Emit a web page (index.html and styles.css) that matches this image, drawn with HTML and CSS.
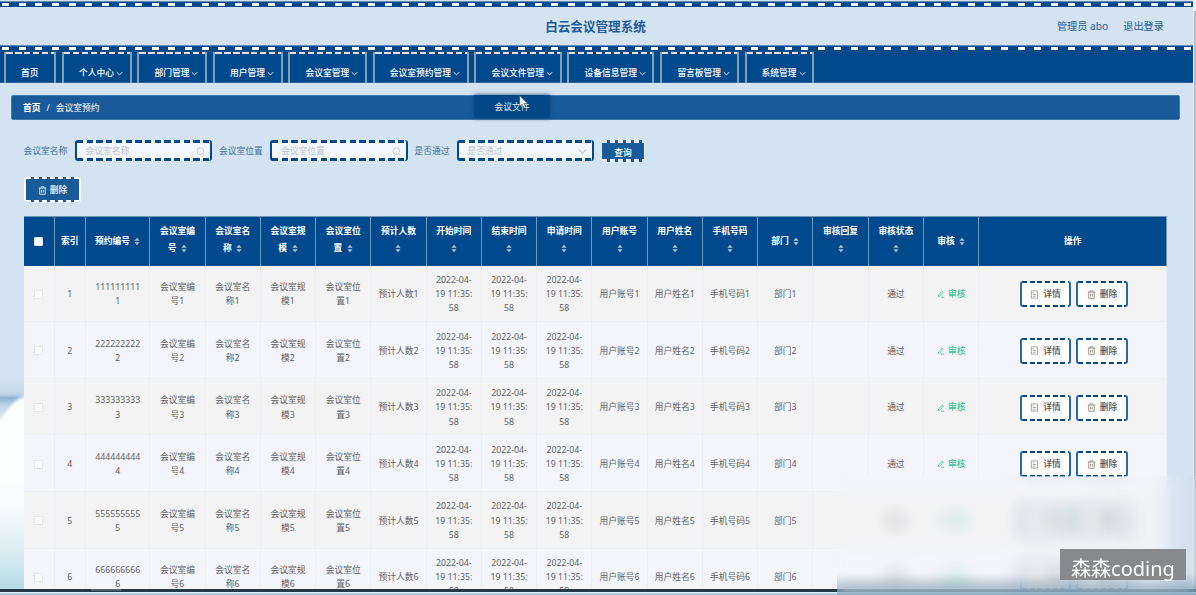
FILE: index.html
```html
<!DOCTYPE html>
<html lang="zh-CN">
<head>
<meta charset="utf-8">
<title>白云会议管理系统</title>
<link rel="stylesheet" href="styles.css">
</head>
<body>
<svg class="defs" width="0" height="0">
  <symbol id="chev" viewBox="0 0 10 10"><path d="M1 3 5 7 9 3" fill="none" stroke="currentColor" stroke-width="1.2"/></symbol>
  <symbol id="search" viewBox="0 0 10 10"><circle cx="4.8" cy="4.6" r="3.7" fill="none" stroke="currentColor" stroke-width=".9"/><path d="M7.2 7.2 9 9" stroke="currentColor" stroke-width=".9"/></symbol>
  <symbol id="trash" viewBox="0 0 10 10"><path d="M.8 2.3h8.4M3.4 2V.9h3.2V2M1.9 2.5v6.7h6.2V2.5M4 4.3v3M6 4.3v3" fill="none" stroke="currentColor" stroke-width=".9"/></symbol>
  <symbol id="doc" viewBox="0 0 10 10"><path d="M1.5 1h7v8h-7zM3.2 3h1.5M3.2 5h3.6M3.2 7h2.2M6.3 7h.7" fill="none" stroke="currentColor" stroke-width=".8"/></symbol>
  <symbol id="edit" viewBox="0 0 10 10"><path d="M2 6.2 6.4 1.3 8 2.7 3.6 7.6 1.7 8zM5 9h4" fill="none" stroke="currentColor" stroke-width="1"/></symbol>
  <symbol id="sort" viewBox="0 0 6 10"><path d="M3 .8 5.9 4.2H.1zM3 9.2 .1 5.8h5.8z" fill="currentColor"/></symbol>
</svg>
<div class="page">
  <div class="stripe first"></div>
  <header class="header">
    <h1 class="title">白云会议管理系统</h1>
    <div class="user"><span>管理员 abo</span><span>退出登录</span></div>
  </header>
  <div class="stripe"></div>
  <nav class="nav" id="nav"></nav>
  <div class="crumb"><b>首页</b><span>/</span><span>会议室预约</span></div>
  <div class="filters">
    <label>会议室名称</label>
    <div class="input dash"><span>会议室名称</span><svg class="ico"><use href="#search"/></svg></div>
    <label>会议室位置</label>
    <div class="input dash"><span>会议室位置</span><svg class="ico"><use href="#search"/></svg></div>
    <label>是否通过</label>
    <div class="input dash"><span>是否通过</span><svg class="ico"><use href="#chev"/></svg></div>
    <button class="btn query dash">查询</button>
  </div>
  <button class="btn remove dash"><svg class="ico"><use href="#trash"/></svg>删除</button>
  <div class="table" id="table"></div>
  <div class="cloud"></div>
</div>
<div class="scrollbar"></div>
<div class="submenu">会议文件</div>
<svg class="cursor" viewBox="0 0 8 13"><path d="M.5.5v10l2.3-2 1.6 3.7 1.6-.8-1.6-3.4h3z" fill="#fff" stroke="#345" stroke-width=".5"/></svg>
<div class="player"><i></i></div>
<div class="haze"></div>
<div class="mark">森森coding</div>
<script src="app.js"></script>
</body>
</html>
```
FILE: styles.css
```css
* { box-sizing: border-box; }
body {
  margin: 0; width: 1196px; height: 595px; overflow: hidden; display: flex;
  position: relative; background: #d4e3f1; color: #606266;
  font: 8.75px/14.2px "Noto Sans", "Noto Sans CJK SC", sans-serif;
}
.defs { position: absolute; }
.page { width: 1193px; height: 595px; overflow: hidden; position: relative; padding-top: 1px; }
.scrollbar { width: 3px; background: linear-gradient(#f4f4f4 11px, #b9bcbe 11px); border-left: 1px solid #e9eef2; }

.stripe {
  height: 6px; border-top: 1px solid #5e8bb2;
  background: repeating-linear-gradient(90deg, #fff 0 7px, transparent 7px 16.65px) 2px 1px / 100% 3px no-repeat, #00498d;
}
.header { height: 38px; display: grid; grid-template-columns: 1fr auto 1fr; align-items: center; color: #1f5c97; }
.title { margin: 1px 2px 0 0; font-size: 12.6px; line-height: 20px; font-weight: 700; grid-column: 2; }
.user { display: flex; justify-content: flex-end; gap: 15px; padding: 1px 29px 0 0; font-size: 10.2px; }

.nav { height: 32px; background: #00498d; display: flex; gap: 5.8px; padding-left: 4px; border-top: 1px solid #1c4c7c; border-bottom: 1px solid #2b649b; }
.tab {
  height: 31px; flex: none; display: flex; align-items: center; gap: 2px; padding: 12px 6.6px 0 15.1px;
  border: solid #7fa2b5; border-width: 0 2px; color: #fff; font-weight: 500; white-space: nowrap;
  background: repeating-linear-gradient(90deg, #e9dfe3 0 6.5px, transparent 6.5px 9px) 0 0 / 100% 2px no-repeat;
}
.tab .ico { width: 7px; height: 7px; }
.tab.home { padding-right: 15.5px; }

.crumb {
  margin: 12px 13px 0 11px; height: 25px; border-radius: 2px; background: #185b98; border: 1px solid #3f7aac;
  display: flex; align-items: center; gap: 6px; padding: 1px 0 0 11px; color: #fff;
}
.filters { display: flex; align-items: center; height: 23px; margin: 19px 0 0 23.5px; color: #4d7ba8; }
.filters label { width: 51px; color: #3f719f; white-space: nowrap; padding-top: 1px; }
.filters label:nth-of-type(3) { width: 42px; }
.dash {
  --c: #00498d; --t: 3px; --on: 6.3px; --per: 9.7px; --bg: #f4f8fc;
  background:
    repeating-linear-gradient(90deg, var(--c) 0 var(--on), transparent var(--on) var(--per)) 0 0 / 100% var(--t) no-repeat,
    repeating-linear-gradient(90deg, var(--c) 0 var(--on), transparent var(--on) var(--per)) 0 100% / 100% var(--t) no-repeat,
    var(--bg);
  border-radius: 3px;
}
.input {
  width: 137.5px; height: 21.5px; margin-right: 7px; padding: 1px 5px 0 9px; color: #bcc3cc;
  border: solid #00498d; border-width: 0 2px; display: flex; align-items: center; justify-content: space-between;
}
.ico { width: 9px; height: 9px; flex: none; display: block; }
.btn { border: 0; color: #fff; font: inherit; font-weight: 500; display: flex; align-items: center; justify-content: center; padding: 0; }
.dash.query { --c: #e7eef5; --t: 3px; --on: 5px; --per: 8px; --bg: #185b98; width: 44px; height: 22px; border: solid #e7eef5; border-width: 0 1px; padding-top: 5px; }
.dash.remove { --c: #fff; --t: 2px; --on: 5px; --per: 8px; --bg: #185b98; width: 57px; height: 25px; margin: 15px 0 0 24px; padding-top: 2px; border: solid #fff; border-width: 0 2px; gap: 3px; }

.table {
  margin: 14px 0 0 23.5px; width: 1143.7px; display: grid; position: relative; z-index: 1;
  grid-template-columns: 31px 31.5px 64.3px repeat(15, 55.27px) 1fr;
  grid-template-rows: 49.6px; grid-auto-rows: 56.6px;
}
.th {
  background: #00498d; color: #fff; font-weight: 700; border-right: 1px solid #6c9cbc; border-top: 1px solid #6c96b5;
  line-height: 17px; display: flex; flex-direction: column; align-items: center; justify-content: center; padding: 0 0 2px;
}
.th.one { padding-bottom: 0; }
.th > div { display: flex; align-items: center; gap: 4.5px; height: 17px; white-space: nowrap; }
.th svg { width: 6px; height: 9px; color: #b3c3d0; }
.td {
  display: flex; align-items: center; justify-content: center; text-align: center; white-space: nowrap;
  background: #f3f3f3; border-right: 1px solid #ebeef5; border-bottom: 1px solid #ebeef5; padding-top: 2px;
}
.td.even { background: #f4f5fb; }
.box { display: block; width: 9px; height: 9px; background: #fff; border: 1px solid #e2e4e9; border-radius: 1px; }
.td .box { margin-right: 1px; }
.td.audit { color: #3dc49a; gap: 3px; font-weight: 500; }
.audit .ico { width: 8px; height: 8px; }
.td.ops { gap: 5px; padding-left: 2px; }
.dash.op {
  --t: 2px; --on: 5px; --per: 7.7px; --bg: #fff; width: 51.5px; height: 26px; gap: 4px; color: #4c4e52;
  border: solid #2b689d; border-width: 0 2px;
}
.op .ico { color: #8b8275; }

.cloud {
  position: absolute; left: 0; top: 376px; width: 24px; height: 219px;
  background: radial-gradient(ellipse 46px 95px at 32px 111px, #fdfefe 94%, transparent 100%) 0 0 / 100% 110px no-repeat,
    linear-gradient(#d4e3f1 0, #c3d7e8 18px, #8fb5d6 22px, #c0d5e7 30px, #fbfdfe 50px, #fafdfe 125px, #d8ebf2 180px, #b4dbe6 213px);
}
.submenu {
  position: absolute; left: 474px; top: 95px; width: 76px; height: 23px; background: #024887; color: #e3ecf4; padding-top: 2px;
  display: flex; align-items: center; justify-content: center; box-shadow: 0 0 4px #164a7b;
}
.cursor { position: absolute; left: 519px; top: 95px; width: 9px; height: 14px; }
.player { position: absolute; left: 0; top: 589px; width: 100%; height: 6px; z-index: 2; background: linear-gradient(#243945 0 3px, #e9f4f8 3px 4px, #a7cfdf 4px); }
.player i { display: block; width: 30px; height: 2px; margin-left: 91px; background: #50616b; }
.haze {
  position: absolute; left: 837px; top: 476px; width: 359px; height: 119px; z-index: 3;
  backdrop-filter: blur(8px);
  background: linear-gradient(transparent 98px, rgba(115,150,178,.55)), linear-gradient(90deg, rgba(244,245,250,.15) 70%, rgba(217,231,243,.1));
}
.mark {
  position: absolute; left: 1060px; top: 549px; width: 126px; height: 31px; z-index: 4; background: #87898d;
  color: #fff; font-size: 20px; line-height: 28px; padding-top: 6px; text-align: center; white-space: nowrap;
}
```
FILE: app.js
```js
const icon = id => `<svg class="ico"><use href="#${id}"/></svg>`;

const tabs = ['首页', '个人中心', '部门管理', '用户管理', '会议室管理', '会议室预约管理', '会议文件管理', '设备信息管理', '留言板管理', '系统管理'];
document.getElementById('nav').innerHTML = tabs
  .map((t, i) => `<div class="tab${i ? '' : ' home'}">${t}${i ? icon('chev') : ''}</div>`).join('');

const sort = '<svg><use href="#sort"/></svg>';
const two = (a, b = '') => `<div class="th"><div>${a}</div><div>${b}${sort}</div></div>`;
const one = (a, s = sort) => `<div class="th one"><div>${a}${s}</div></div>`;
let html = one('<span class="box"></span>', '') + one('索引', '') + one('预约编号') +
  two('会议室编', '号') + two('会议室名', '称') + two('会议室规', '模') + two('会议室位', '置') +
  ['预计人数', '开始时间', '结束时间', '申请时间', '用户账号', '用户姓名', '手机号码'].map(t => two(t)).join('') +
  one('部门') + two('审核回复') + two('审核状态') + one('审核') + one('操作', '');

const date = '2022-04-<br>19 11:35:<br>58';
for (let n = 1; n <= 6; n++) {
  const td = (c, k = '') => `<div class="td ${k}${n % 2 ? '' : ' even'}">${c}</div>`;
  html += [
    '<span class="box"></span>', n, `${String(n).repeat(9)}<br>${n}`,
    `会议室编<br>号${n}`, `会议室名<br>称${n}`, `会议室规<br>模${n}`, `会议室位<br>置${n}`,
    `预计人数${n}`, date, date, date,
    `用户账号${n}`, `用户姓名${n}`, `手机号码${n}`, `部门${n}`, '', '通过'
  ].map(c => td(`<div>${c}</div>`)).join('');
  html += td(`${icon('edit')}审核`, 'audit');
  html += td(`<button class="btn op dash">${icon('doc')}详情</button><button class="btn op dash">${icon('trash')}删除</button>`, 'ops');
}
document.getElementById('table').innerHTML = html;
```
